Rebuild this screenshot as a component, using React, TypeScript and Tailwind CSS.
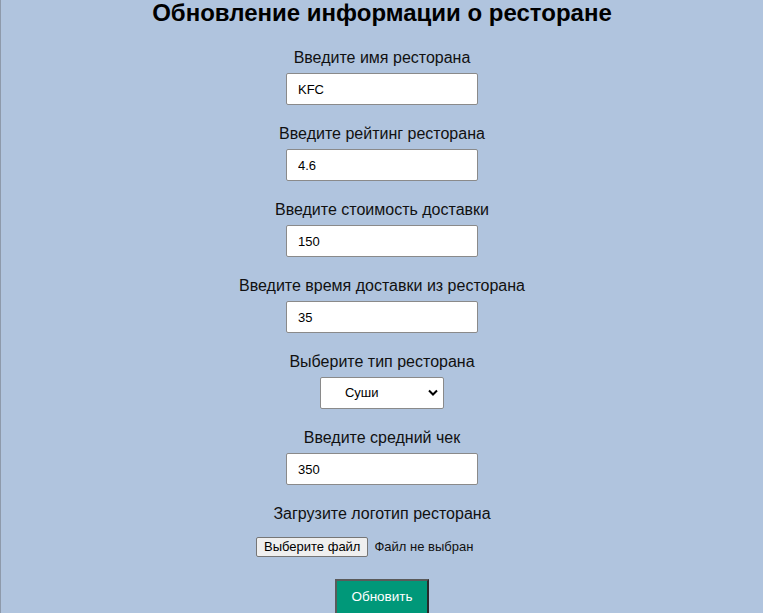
import { useState } from "react";

type FieldProps = {
  label: string;
  value: string;
};

function Field({ label, value }: FieldProps) {
  return (
    <div className="flex flex-col items-center">
      <label className="text-[16px] leading-[18px] text-[#111]">{label}</label>
      <input
        type="text"
        defaultValue={value}
        className="mt-[6px] h-[32px] w-[192px] rounded-[2px] border border-[#8a8a8a] bg-white px-[11px] text-[13px] text-black outline-none"
      />
    </div>
  );
}

function App() {
  const [kind, setKind] = useState("sushi");

  return (
    <div
      className="mr-[2px] min-h-[613px] border-l border-[#8e9aab] bg-[#b0c4de] text-[#111]"
      style={{ fontFamily: '"Liberation Sans", Arial, sans-serif' }}
    >
      <h1 className="text-center text-[24px] font-bold leading-[25px] text-black">
        Обновление информации о ресторане
      </h1>

      <form className="mt-[24px] flex flex-col items-center gap-[20px]">
        <Field label="Введите имя ресторана" value="KFC" />
        <Field label="Введите рейтинг ресторана" value="4.6" />
        <Field label="Введите стоимость доставки" value="150" />
        <Field label="Введите время доставки из ресторана" value="35" />

        <div className="flex flex-col items-center">
          <label className="text-[16px] leading-[18px]">Выберите тип ресторана</label>
          <div className="relative mt-[6px]">
            <select
              value={kind}
              onChange={(e) => setKind(e.target.value)}
              className="h-[32px] w-[124px] appearance-none rounded-[2px] border border-[#8a8a8a] bg-white pl-[24px] text-[13px] text-black outline-none"
            >
              <option value="sushi">Суши</option>
              <option value="pizza">Пицца</option>
              <option value="burger">Бургеры</option>
            </select>
            <svg
              className="pointer-events-none absolute right-[6px] top-[12px]"
              width="10"
              height="7"
              viewBox="0 0 10 7"
            >
              <path d="M1 1.5 L5 5.5 L9 1.5" fill="none" stroke="#000" strokeWidth="2" />
            </svg>
          </div>
        </div>

        <Field label="Введите средний чек" value="350" />

        <div className="flex flex-col items-center">
          <label className="text-[16px] leading-[18px]">Загрузите логотип ресторана</label>
          <div className="mt-[14px] flex w-[252px] items-center text-[13px]">
            <button
              type="button"
              className="h-[20px] rounded-[2px] border border-[#767676] bg-[#efefef] px-[7px] text-[13px] leading-[18px] text-black"
            >
              Выберите файл
            </button>
            <span className="ml-[6px] text-[#111]">Файл не выбран</span>
          </div>
        </div>

        <button
          type="button"
          className="mt-[2px] h-[36px] w-[94px] border-2 border-t-[#5a5a5a] border-l-[#5a5a5a] border-r-[#2a2a2a] border-b-[#2a2a2a] bg-[#009879] text-[13.5px] text-white"
        >
          Обновить
        </button>
      </form>
    </div>
  );
}

export default App;
